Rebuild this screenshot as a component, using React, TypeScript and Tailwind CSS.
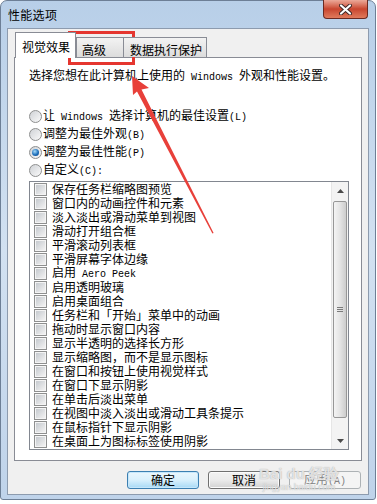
import React from "react";

const ITEMS: React.ReactNode[] = [
  "保存任务栏缩略图预览",
  "窗口内的动画控件和元素",
  "淡入淡出或滑动菜单到视图",
  "滑动打开组合框",
  "平滑滚动列表框",
  "平滑屏幕字体边缘",
  <>
    启用<L> Aero Peek</L>
  </>,
  "启用透明玻璃",
  "启用桌面组合",
  "任务栏和「开始」菜单中的动画",
  "拖动时显示窗口内容",
  "显示半透明的选择长方形",
  "显示缩略图，而不是显示图标",
  "在窗口和按钮上使用视觉样式",
  "在窗口下显示阴影",
  "在单击后淡出菜单",
  "在视图中淡入淡出或滑动工具条提示",
  "在鼠标指针下显示阴影",
  "在桌面上为图标标签使用阴影",
];

// half-width latin, like SimSun's 6px cells
function L({ children }: { children: React.ReactNode }) {
  return (
    <span className="font-['Liberation_Mono',monospace] text-[10px] whitespace-pre">
      {children}
    </span>
  );
}

function Radio({ checked, children }: { checked?: boolean; children: React.ReactNode }) {
  return (
    <div className="flex h-[18px] items-center">
      <div className="flex h-[13px] w-[13px] items-center justify-center rounded-full border border-[#8e8f8f] bg-gradient-to-br from-[#cfd2d6] to-[#fafafa]">
        {checked && (
          <div className="h-[7px] w-[7px] rounded-full bg-[radial-gradient(circle_at_40%_35%,#a8dcfa,#1d6fbb_55%,#0c3c78)]" />
        )}
      </div>
      <span className="ml-[1px] leading-[14px]">{children}</span>
    </div>
  );
}

function Checkbox() {
  return (
    <div className="h-[13px] w-[13px] border border-[#8e8f8f] bg-[#f4f4f4] p-[1px]">
      <div className="h-full w-full bg-gradient-to-br from-[#c6cacf] to-[#f2f2f2]" />
    </div>
  );
}

function Scrollbar() {
  return (
    <div className="flex h-full w-[17px] flex-col border-l border-[#e6e6e6] bg-[#f3f3f3]">
      <div className="flex h-[17px] items-center justify-center">
        <svg width="7" height="4" viewBox="0 0 7 4">
          <path d="M3.5 0 L7 4 L0 4 Z" fill="#4a4a4a" />
        </svg>
      </div>
      <div className="mx-[1px] mt-[2px] flex h-[217px] items-center justify-center rounded-[2px] border border-[#979797] bg-gradient-to-r from-[#f4f4f4] via-[#e4e4e4] to-[#cdcdcd]">
        <div className="flex flex-col gap-[1px]">
          <div className="h-px w-[6px] bg-[#7a7a7a]" />
          <div className="h-px w-[6px] bg-[#7a7a7a]" />
          <div className="h-px w-[6px] bg-[#7a7a7a]" />
        </div>
      </div>
      <div className="flex-1" />
      <div className="flex h-[17px] items-center justify-center">
        <svg width="7" height="4" viewBox="0 0 7 4">
          <path d="M0 0 L7 0 L3.5 4 Z" fill="#4a4a4a" />
        </svg>
      </div>
    </div>
  );
}

export default function App() {
  return (
    <div className="relative h-[504px] w-[377px] overflow-hidden bg-white font-['Noto_Sans_CJK_SC','Liberation_Sans',sans-serif] text-[12px] text-black">
      <div className="flex h-[500px] w-[376px] flex-col rounded-t-[7px] rounded-b-[3px] border border-[#6d7f96] bg-gradient-to-b from-[#b8cfe8] via-[#d2e1f1] to-[#bfd3ea] px-[6px] pb-[4px]">
        {/* title bar */}
        <div className="flex h-[27px] items-start justify-between">
          <span className="pl-[1px] pt-[7px] leading-[14px] tracking-[0.3px]">性能选项</span>
          <div className="-mt-px mr-[1px] flex h-[19px] w-[45px] items-center justify-center rounded-b-[4px] border border-t-0 border-[#6b2a22] bg-gradient-to-b from-[#eba999] via-[#c8452f] to-[#e07a5c]">
            <svg width="13" height="11" viewBox="0 0 13 11">
              <path d="M2 1.5 L11 9.5 M11 1.5 L2 9.5" stroke="#3b2626" strokeWidth="4" strokeLinecap="round" />
              <path d="M2 1.5 L11 9.5 M11 1.5 L2 9.5" stroke="#ffffff" strokeWidth="2.2" strokeLinecap="round" />
            </svg>
          </div>
        </div>

        {/* client area */}
        <div className="flex flex-1 flex-col border border-[#8d9bae] bg-[#f0f0f0] px-[6px] pt-[3px]">
          {/* tabs */}
          <div className="relative z-10 flex h-[25px] items-end pl-[1px]">
            <div className="-mb-px h-[26px] w-[61px] border border-b-0 border-[#898c95] bg-white pl-[6px] pt-[7px] leading-[14px]">
              视觉效果
            </div>
            <div className="h-[20px] w-[48px] border border-b-0 border-[#898c95] bg-gradient-to-b from-[#f3f3f3] to-[#dcdcdc] pl-[5px] pt-[5px] leading-[14px]">
              高级
            </div>
            <div className="-ml-px h-[20px] w-[84px] border border-b-0 border-[#898c95] bg-gradient-to-b from-[#f3f3f3] to-[#dcdcdc] pl-[6px] pt-[5px] leading-[14px]">
              数据执行保护
            </div>
          </div>

          {/* panel */}
          <div className="flex h-[404px] flex-col border border-[#898c95] bg-white pl-[14px] pt-[10px]">
            <div className="leading-[14px]">
              选择您想在此计算机上使用的<L> Windows </L>外观和性能设置。
            </div>
            <div className="mt-[22px] flex flex-col">
              <Radio>
                让<L> Windows </L>选择计算机的最佳设置<L>(L)</L>
              </Radio>
              <Radio>
                调整为最佳外观<L>(B)</L>
              </Radio>
              <Radio checked>
                调整为最佳性能<L>(P)</L>
              </Radio>
              <Radio>
                自定义<L>(C):</L>
              </Radio>
            </div>

            <div className="mt-[2px] flex h-[269px] w-[320px] border border-[#828790] bg-white">
              <div className="flex flex-1 flex-col">
                {ITEMS.map((item, i) => (
                  <div key={i} className="flex h-[14px] items-center pl-[4px]">
                    <Checkbox />
                    <span className="ml-[5px] whitespace-nowrap leading-[14px]">{item}</span>
                  </div>
                ))}
              </div>
              <Scrollbar />
            </div>
          </div>

          {/* buttons */}
          <div className="mt-[10px] flex justify-end gap-[9px] pr-[1px]">
            <button className="h-[18px] w-[72px] rounded-[3px] border border-[#3c7fb1] bg-gradient-to-b from-[#eaf6fd] via-[#d9f0fc] to-[#a7d9f5] leading-[14px] shadow-[inset_0_0_0_1px_#c6e7fb]">
              确定
            </button>
            <button className="h-[18px] w-[72px] rounded-[3px] border border-[#707070] bg-gradient-to-b from-[#f2f2f2] via-[#ebebeb] to-[#d2d2d2] leading-[14px] shadow-[inset_0_0_0_1px_#fbfbfb]">
              取消
            </button>
            <button className="h-[18px] w-[72px] rounded-[3px] border border-[#adb2b5] bg-[#f4f4f4] leading-[14px] text-[#838383]">
              应用<L>(A)</L>
            </button>
          </div>
        </div>
      </div>

      {/* watermark */}
      <div className="pointer-events-none absolute left-[259px] top-[466px] flex flex-col items-center text-white/70 [text-shadow:0_0_1px_#9a9a9a]">
        <span className="font-['Liberation_Sans',sans-serif] text-[15px] font-bold leading-[16px]">
          Bai du 经验
        </span>
        <span className="font-['Liberation_Sans',sans-serif] text-[9px] leading-[10px]">jingyan.baidu.com</span>
      </div>

      {/* red highlight box */}
      <div className="pointer-events-none absolute left-[68px] top-[31px] h-[34px] w-[67px] border-[3px] border-[#e5362f]" />

      {/* red arrow */}
      <svg className="pointer-events-none absolute left-0 top-0" width="377" height="504">
        <polygon
          points="132,76 149,88 141.5,89.5 213.6,233 212.4,233.6 137,91.5 133,95"
          fill="#e8403a"
        />
      </svg>
    </div>
  );
}
